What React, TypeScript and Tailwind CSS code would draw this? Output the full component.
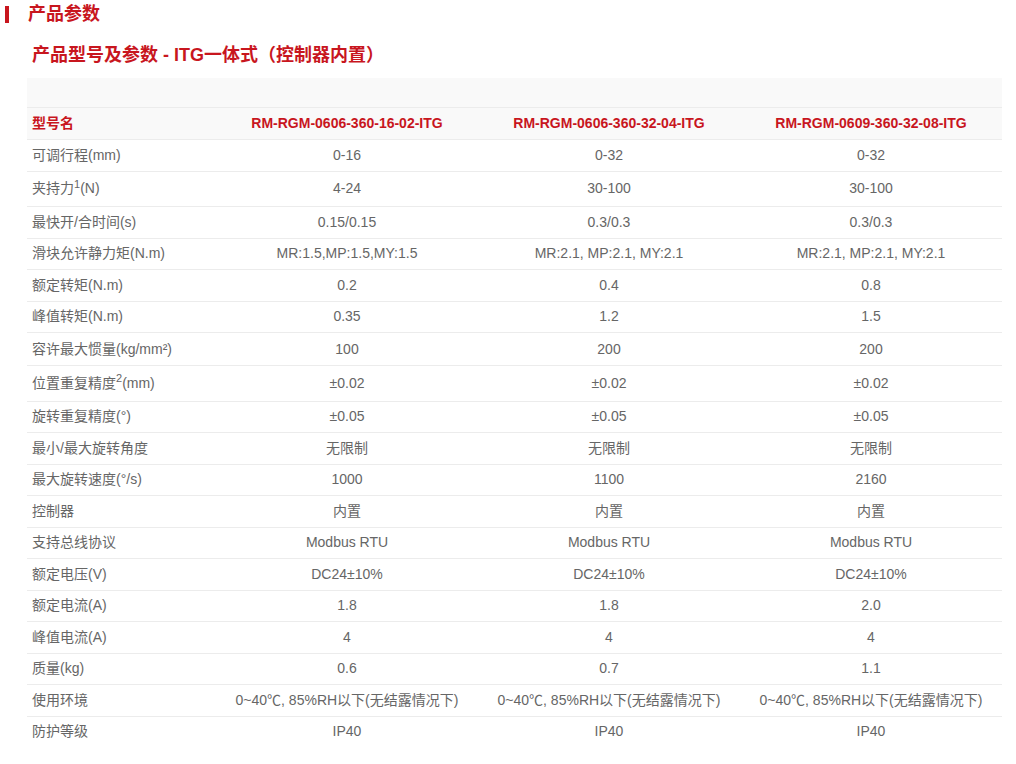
type Row = {
  label: React.ReactNode
  values: [string, string, string]
  tall?: boolean
  mid?: boolean
}

const models: [string, string, string] = [
  'RM-RGM-0606-360-16-02-ITG',
  'RM-RGM-0606-360-32-04-ITG',
  'RM-RGM-0609-360-32-08-ITG',
]

const rows: Row[] = [
  { label: '可调行程(mm)', values: ['0-16', '0-32', '0-32'] },
  {
    label: (
      <>
        夹持力<sup className="text-[11px]">1</sup>(N)
      </>
    ),
    values: ['4-24', '30-100', '30-100'],
    tall: true,
  },
  { label: '最快开/合时间(s)', values: ['0.15/0.15', '0.3/0.3', '0.3/0.3'] },
  {
    label: '滑块允许静力矩(N.m)',
    values: ['MR:1.5,MP:1.5,MY:1.5', 'MR:2.1, MP:2.1, MY:2.1', 'MR:2.1, MP:2.1, MY:2.1'],
  },
  { label: '额定转矩(N.m)', values: ['0.2', '0.4', '0.8'] },
  { label: '峰值转矩(N.m)', values: ['0.35', '1.2', '1.5'] },
  { label: '容许最大惯量(kg/mm²)', values: ['100', '200', '200'], mid: true },
  {
    label: (
      <>
        位置重复精度<sup className="text-[11px]">2</sup>(mm)
      </>
    ),
    values: ['±0.02', '±0.02', '±0.02'],
    tall: true,
  },
  { label: '旋转重复精度(°)', values: ['±0.05', '±0.05', '±0.05'] },
  { label: '最小/最大旋转角度', values: ['无限制', '无限制', '无限制'] },
  { label: '最大旋转速度(°/s)', values: ['1000', '1100', '2160'] },
  { label: '控制器', values: ['内置', '内置', '内置'] },
  { label: '支持总线协议', values: ['Modbus RTU', 'Modbus RTU', 'Modbus RTU'] },
  { label: '额定电压(V)', values: ['DC24±10%', 'DC24±10%', 'DC24±10%'] },
  { label: '额定电流(A)', values: ['1.8', '1.8', '2.0'] },
  { label: '峰值电流(A)', values: ['4', '4', '4'] },
  { label: '质量(kg)', values: ['0.6', '0.7', '1.1'] },
  {
    label: '使用环境',
    values: [
      '0~40℃, 85%RH以下(无结露情况下)',
      '0~40℃, 85%RH以下(无结露情况下)',
      '0~40℃, 85%RH以下(无结露情况下)',
    ],
  },
  { label: '防护等级', values: ['IP40', 'IP40', 'IP40'] },
]

const grid = 'grid grid-cols-[189px_262px_262px_262px] items-center'

export default function App() {
  return (
    <div
      className="min-h-[764px] w-[1016px] bg-white text-[14px] text-[#666]"
      style={{ fontFamily: '"Liberation Sans", "Noto Sans CJK SC", sans-serif' }}
    >
      <div className="flex h-[28px] items-center">
        <span className="ml-[5px] h-[17px] w-[4px] bg-[#c8161e]" />
        <h2 className="ml-[19px] text-[18px] leading-none font-bold text-[#c8161e]">产品参数</h2>
      </div>

      <h3 className="mt-[17px] ml-[32px] text-[18px] leading-[20px] font-bold text-[#c8161e]">
        产品型号及参数 - ITG一体式（控制器内置）
      </h3>

      <div className="mt-[13px] ml-[27px] w-[975px]">
        <div className="h-[30px] border-b border-[#ececec] bg-[#f9f9f9]" />
        <div className={`${grid} h-[31px] bg-[#f9f9f9] font-bold text-[#c8161e]`}>
          <div className="pl-[5px]">型号名</div>
          {models.map((m) => (
            <div key={m} className="text-center">
              {m}
            </div>
          ))}
        </div>
        {rows.map((r, i) => (
          <div
            key={i}
            className={`${grid} border-t border-[#ececec] ${
              r.tall ? 'h-[35.5px]' : r.mid ? 'h-[33px]' : 'h-[31.5px]'
            }`}
          >
            <div className="pl-[5px] whitespace-nowrap">{r.label}</div>
            {r.values.map((v, j) => (
              <div key={j} className="text-center whitespace-nowrap">
                {v}
              </div>
            ))}
          </div>
        ))}
      </div>
    </div>
  )
}
